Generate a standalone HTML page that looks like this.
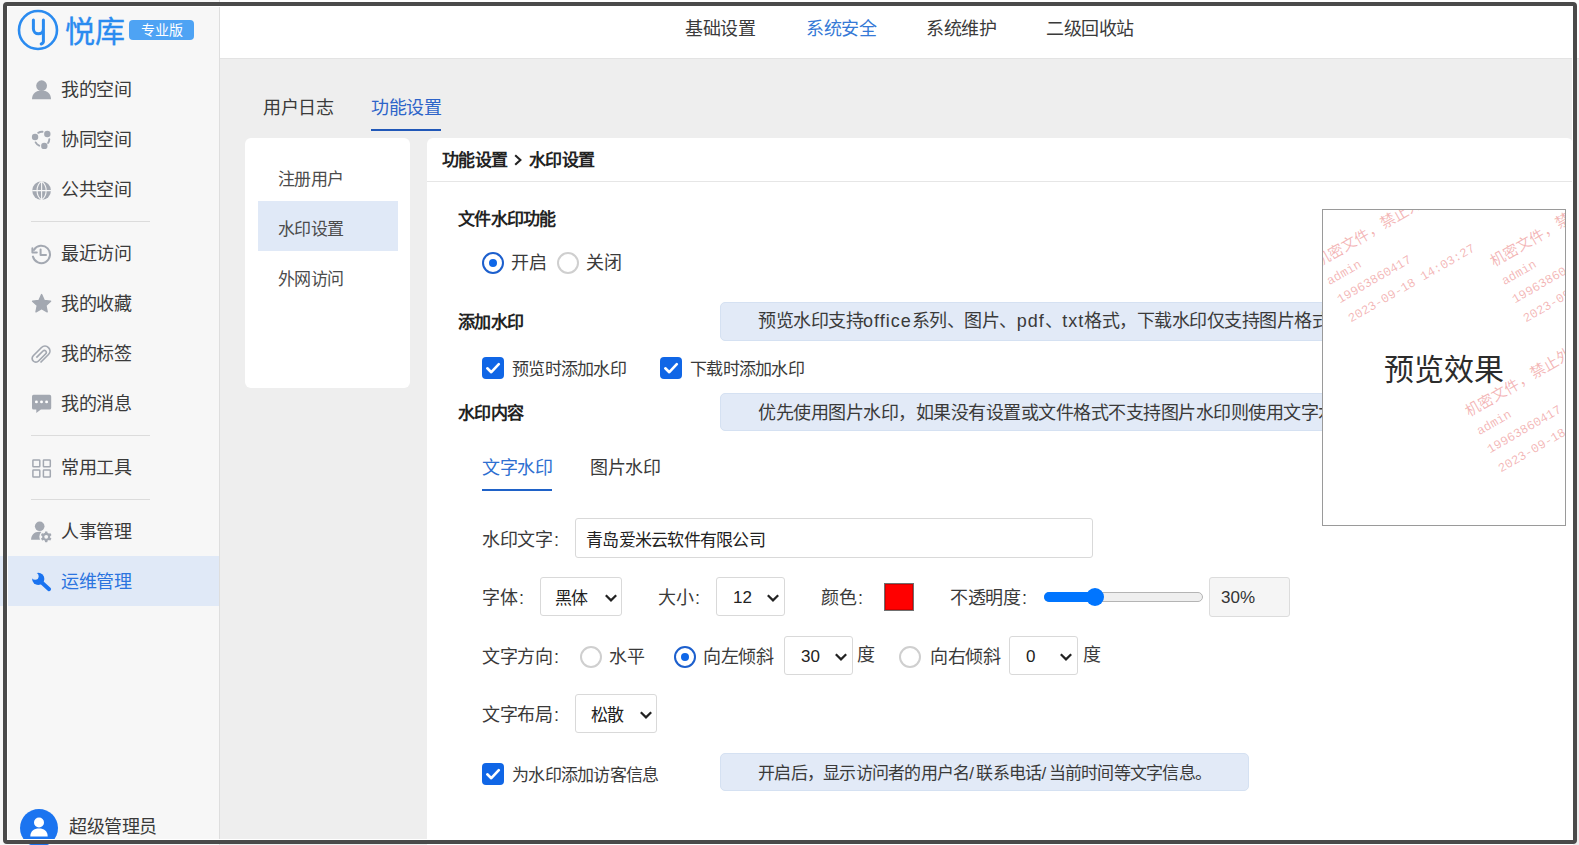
<!DOCTYPE html>
<html lang="zh-CN"><head><meta charset="utf-8">
<style>
*{box-sizing:border-box;margin:0;padding:0}
html,body{width:1579px;height:845px;overflow:hidden;background:#fff;font-family:"Liberation Sans",sans-serif;color:#333}
.a{position:absolute;white-space:nowrap}
#side{position:absolute;left:0;top:0;width:220px;height:845px;background:#f7f7f7;border-right:1px solid #dedede}
#head{position:absolute;left:220px;top:0;width:1359px;height:59px;background:#fff;border-bottom:1px solid #e3e3e3}
#mainbg{position:absolute;left:220px;top:59px;width:1359px;height:786px;background:#eeeeee}
.mi{position:absolute;left:61px;font-size:18px;letter-spacing:-0.5px;line-height:24px;color:#3a3a3a}
.ic{position:absolute;left:31px;width:20px;height:20px}
.sep{position:absolute;left:31px;width:119px;height:1px;background:#dcdcdc}
.nav{position:absolute;top:16.5px;font-size:18px;letter-spacing:-0.5px;line-height:24px;color:#3a3a3a}
.card{position:absolute;background:#fff;border-radius:6px}
.sub{position:absolute;left:278px;font-size:17px;letter-spacing:-0.75px;line-height:20px;color:#4c4c4c}
.lbl{position:absolute;left:458px;font-size:17px;letter-spacing:-0.75px;font-weight:bold;color:#222;line-height:20px}
.info{position:absolute;left:720px;background:#e2eaf7;border:1px solid #d5e1f2;border-radius:5px;overflow:hidden}
.info span{position:absolute;left:37px;font-size:18px;letter-spacing:-0.5px;color:#3a3a3a;white-space:nowrap}
.t18{font-size:18px;letter-spacing:-0.5px;color:#3a3a3a;line-height:24px}
.t16{font-size:17px;letter-spacing:-0.75px;color:#3a3a3a;line-height:20px}
.radio{position:absolute;width:22px;height:22px;border-radius:50%;border:2px solid #cfcfcf;background:#fff}
.radio.on{border-color:#1c5fcd}
.radio.on::after{content:"";position:absolute;left:5px;top:5px;width:8px;height:8px;border-radius:50%;background:#0f67e8}
.cb{position:absolute;width:22px;height:22px;border-radius:4px;background:#1066e6}
.sel{position:absolute;border:1px solid #d9d9d9;border-radius:3px;background:#fff;height:39px}
.sel span{position:absolute;top:10.5px;font-size:17px;letter-spacing:-0.75px;color:#222;line-height:20px}
.sel svg{position:absolute;top:14px}
.wm{position:absolute;transform-origin:0 0;transform:rotate(-30deg);font-family:"Liberation Mono",monospace;font-size:12.5px;line-height:21.6px;color:rgba(220,40,40,0.34);letter-spacing:0.08px;white-space:nowrap}
.wm .l1{font-size:15px;line-height:21.6px}
i.lat{font-style:normal;letter-spacing:1px}
i.co{font-style:normal;margin-left:2px}
i.sl{font-style:normal;letter-spacing:2.5px}
#frame{position:absolute;left:3px;top:2px;width:1574px;height:842px;border:4px solid #4a4a4a;border-radius:4px;box-shadow:inset 0 0 0 1px #fff;pointer-events:none}
</style></head><body>

<div id="side"></div>
<div id="head"></div>
<div id="mainbg"></div>

<!-- logo -->
<svg class="a" style="left:16px;top:9px" width="44" height="44" viewBox="0 0 44 44">
 <circle cx="22" cy="21" r="19" fill="none" stroke="#2a8bf0" stroke-width="2.6"/>
 <path d="M17.4 11 V19.8 a5 5 0 0 0 10 0 M27.4 11 V32.6 q0 1.6 -2.2 2.4" fill="none" stroke="#2a8bf0" stroke-width="3" stroke-linecap="round"/>
</svg>
<div class="a" style="left:65px;top:13.5px;font-size:30px;line-height:36px;color:#2a8bf0;-webkit-text-stroke:0.35px #2a8bf0">悦库</div>
<div class="a" style="left:129px;top:20px;width:65px;height:20px;background:#4ea3f4;border-radius:4px;color:#fff;font-size:14px;line-height:20px;text-align:center">专业版</div>


<div class="sep" style="top:221px"></div>
<div class="sep" style="top:435px"></div>
<div class="sep" style="top:499px"></div>
<div class="a" style="left:0;top:556px;width:219px;height:50px;background:#e0e9f7"></div>

<svg class="a" style="left:30px;top:78px" width="24" height="24" viewBox="0 0 24 24" fill="#a3a8b1">
 <circle cx="11.6" cy="7.7" r="5.4"/><path d="M2 21.3 C2 15.5 6 12.4 11.6 12.4 C17.2 12.4 21 15.5 21 21.3 Z"/>
</svg>
<div class="mi" style="top:78px">我的空间</div>

<svg class="a" style="left:30px;top:128px" width="24" height="24" viewBox="0 0 24 24">
 <path d="M8.19 4.84 A7.26 7.26 0 0 1 12.55 3.76 M19.30 11.25 A7.26 7.26 0 0 1 18.06 15.06 M9.20 17.68 A7.26 7.26 0 0 1 5.63 14.41" stroke="#a3a8b1" stroke-width="1.9" fill="none" stroke-linecap="round"/>
 <circle cx="5.05" cy="9.04" r="3.2" fill="#a3a8b1"/><circle cx="17.3" cy="6" r="3.2" fill="#a3a8b1"/><circle cx="14.3" cy="17.9" r="3.2" fill="#a3a8b1"/>
</svg>
<div class="mi" style="top:128px">协同空间</div>

<svg class="a" style="left:30px;top:178.8px" width="24" height="24" viewBox="0 0 24 24">
 <circle cx="11.6" cy="11.6" r="9.4" fill="#a3a8b1"/>
 <path d="M11.6 2.2 V21 M2.2 11.6 H21 M11.4 2.4 C5.6 6.5 5.6 16.7 11.4 20.8 M11.8 2.4 C17.6 6.5 17.6 16.7 11.8 20.8" stroke="#f7f7f7" stroke-width="1.1" fill="none"/>
</svg>
<div class="mi" style="top:178px">公共空间</div>

<svg class="a" style="left:30px;top:241.5px" width="24" height="24" viewBox="0 0 24 24" fill="none" stroke="#a3a8b1" stroke-width="2" stroke-linecap="round" stroke-linejoin="round">
 <path d="M3.9 7.9 A8.7 8.7 0 1 1 2.9 14.6"/><path d="M2.4 6.2 V10.4 H6.8"/><path d="M10.6 7.4 V12.9 H16"/>
</svg>
<div class="mi" style="top:242px">最近访问</div>

<svg class="a" style="left:30px;top:292px" width="24" height="24" viewBox="0 0 24 24" fill="#a3a8b1">
 <path d="M11.6 2.6 L14.3 8.5 L20.6 9.2 L15.9 13.5 L17.2 19.8 L11.6 16.6 L6 19.8 L7.3 13.5 L2.6 9.2 L8.9 8.5 Z" stroke="#a3a8b1" stroke-width="1.4" stroke-linejoin="round"/>
</svg>
<div class="mi" style="top:292px">我的收藏</div>

<svg class="a" style="left:30px;top:342px" width="24" height="24" viewBox="0 0 24 24" fill="none" stroke="#a3a8b1" stroke-width="1.7" stroke-linecap="butt">
 <path d="M10.5 20.5 L18.5 12.5 A4.95 4.95 0 0 0 11.5 5.5 L3.25 13.75 A3.71 3.71 0 0 0 8.5 19 L15.75 11.75 A1.94 1.94 0 0 0 13 9 L6.35 15.65"/>
</svg>
<div class="mi" style="top:342px">我的标签</div>

<svg class="a" style="left:30px;top:392px" width="24" height="24" viewBox="0 0 24 24">
 <path d="M3.6 2.8 H19.6 a1.6 1.6 0 0 1 1.6 1.6 V15.9 a1.6 1.6 0 0 1 -1.6 1.6 H10.9 L6.3 20.9 V17.5 H3.6 a1.6 1.6 0 0 1 -1.6 -1.6 V4.4 a1.6 1.6 0 0 1 1.6 -1.6 Z" fill="#a3a8b1"/>
 <circle cx="6.4" cy="9.9" r="1.45" fill="#fff"/><circle cx="11.5" cy="9.9" r="1.45" fill="#fff"/><circle cx="16.6" cy="9.9" r="1.45" fill="#fff"/>
</svg>
<div class="mi" style="top:392px">我的消息</div>

<svg class="a" style="left:30px;top:456px" width="24" height="24" viewBox="0 0 24 24" fill="none" stroke="#a3a8b1" stroke-width="1.5">
 <rect x="2.9" y="3.9" width="6.9" height="6.9" rx="0.6"/><rect x="13.4" y="3.9" width="6.9" height="6.9" rx="0.6"/>
 <rect x="2.9" y="14.1" width="6.9" height="6.9" rx="0.6"/><rect x="13.4" y="14.1" width="6.9" height="6.9" rx="0.6"/>
</svg>
<div class="mi" style="top:456px">常用工具</div>

<svg class="a" style="left:30px;top:520px" width="24" height="24" viewBox="0 0 24 24">
 <circle cx="9.7" cy="6.3" r="4.8" fill="#a3a8b1"/>
 <path d="M1.1 19.8 C1.1 15.2 4.2 11.8 9.2 11.8 C13.5 11.8 16.5 14 17.5 17.5 V19.8 Z" fill="#a3a8b1"/>
 <circle cx="16.2" cy="16.8" r="6.9" fill="#f7f7f7"/>
 <g transform="translate(16.2,16.8)" fill="#a3a8b1"><circle r="4"/>
 <rect x="-1.25" y="-5.4" width="2.5" height="10.8" rx="0.4"/><rect x="-1.25" y="-5.4" width="2.5" height="10.8" rx="0.4" transform="rotate(60)"/><rect x="-1.25" y="-5.4" width="2.5" height="10.8" rx="0.4" transform="rotate(120)"/>
 <circle r="1.9" fill="#f7f7f7"/></g>
</svg>
<div class="mi" style="top:520px">人事管理</div>

<svg class="a" style="left:30px;top:568px" width="24" height="28" viewBox="0 0 24 28">
 <circle cx="8.25" cy="10.9" r="6.1" fill="#1a73f0"/>
 <line x1="9" y1="12" x2="19.1" y2="21.3" stroke="#1a73f0" stroke-width="3.9" stroke-linecap="round"/>
 <circle cx="5.1" cy="8.3" r="3.5" fill="#e0e9f7"/>
</svg>
<div class="mi" style="top:570px;color:#2b74df">运维管理</div>

<svg class="a" style="left:20px;top:809px" width="38" height="38" viewBox="0 0 38 38">
 <circle cx="19" cy="19" r="19" fill="#1b74f0"/>
 <circle cx="19" cy="13.5" r="5" fill="#fff"/><path d="M10.3 27.4 C10.3 22 14 19.5 19 19.5 C24 19.5 27.7 22 27.7 27.4 Z" fill="#fff"/>
</svg>
<div class="mi" style="left:69px;top:815px">超级管理员</div>

<!-- header nav -->
<div class="nav" style="left:685px">基础设置</div>
<div class="nav" style="left:806px;color:#3579d6">系统安全</div>
<div class="nav" style="left:926px">系统维护</div>
<div class="nav" style="left:1046px">二级回收站</div>

<!-- tabs -->
<div class="a t18" style="left:263px;top:96px">用户日志</div>
<div class="a t18" style="left:371px;top:96px;color:#2d64c9">功能设置</div>
<div class="a" style="left:371px;top:129px;width:70px;height:2px;background:#2158b8"></div>

<!-- submenu card -->
<div class="card" style="left:245px;top:138px;width:165px;height:250px"></div>
<div class="a" style="left:258px;top:201px;width:140px;height:50px;background:#e0e9f7"></div>
<div class="sub" style="top:170px">注册用户</div>
<div class="sub" style="top:220px">水印设置</div>
<div class="sub" style="top:270px">外网访问</div>

<!-- main card -->
<div class="card" style="left:427px;top:138px;width:1146px;height:720px"></div>
<div class="a" style="left:427px;top:181px;width:1146px;height:1px;background:#e6e6e6"></div>
<div class="a" style="left:442px;top:151px;font-size:17px;letter-spacing:-0.75px;line-height:20px;font-weight:bold;color:#222">功能设置<span style="display:inline-block;width:22px;height:10px;position:relative"><svg style="position:absolute;left:6px;top:-2px" width="10" height="12" viewBox="0 0 10 12"><path d="M2.2 1.2 L7.4 6 L2.2 10.8" fill="none" stroke="#222" stroke-width="2.1"/></svg></span>水印设置</div>


<div class="lbl" style="top:210px">文件水印功能</div>
<div class="radio on" style="left:482px;top:252px"></div>
<div class="a t18" style="left:511px;top:251px">开启</div>
<div class="radio" style="left:557px;top:252px"></div>
<div class="a t18" style="left:586px;top:251px">关闭</div>

<div class="lbl" style="top:313px">添加水印</div>
<div class="info" style="top:302px;width:700px;height:39px"><span style="top:6px;line-height:24px">预览水印支持<i class="lat">office</i>系列、图片、<i class="lat">pdf</i>、<i class="lat">txt</i>格式，下载水印仅支持图片格式</span></div>
<div class="cb" style="left:482px;top:357px"><svg width="22" height="22" viewBox="0 0 22 22"><path d="M5.3 11.3 L9.3 15.2 L16.8 7.2" fill="none" stroke="#fff" stroke-width="2.6" stroke-linecap="round" stroke-linejoin="round"/></svg></div>
<div class="a t16" style="left:512px;top:360px">预览时添加水印</div>
<div class="cb" style="left:660px;top:357px"><svg width="22" height="22" viewBox="0 0 22 22"><path d="M5.3 11.3 L9.3 15.2 L16.8 7.2" fill="none" stroke="#fff" stroke-width="2.6" stroke-linecap="round" stroke-linejoin="round"/></svg></div>
<div class="a t16" style="left:690px;top:360px">下载时添加水印</div>

<div class="lbl" style="top:404px">水印内容</div>
<div class="info" style="top:393px;width:700px;height:38px"><span style="top:6.5px;line-height:24px">优先使用图片水印，如果没有设置或文件格式不支持图片水印则使用文字水印</span></div>

<div class="a t18" style="left:482px;top:456px;color:#2e6fd1">文字水印</div>
<div class="a t18" style="left:590px;top:456px">图片水印</div>
<div class="a" style="left:482px;top:489px;width:70px;height:2px;background:#1f62c8"></div>

<div class="a t18" style="left:482px;top:528px">水印文字<i class="co">:</i></div>
<div class="a" style="left:575px;top:518px;width:518px;height:40px;border:1px solid #d9d9d9;border-radius:3px"></div>
<div class="a t16" style="left:586px;top:531px;color:#222">青岛爱米云软件有限公司</div>

<div class="a t18" style="left:482px;top:586px">字体<i class="co">:</i></div>
<div class="sel" style="left:540px;top:577px;width:82px"><span style="left:14px">黑体</span><svg style="left:62.6px;top:14.5px" width="14" height="10" viewBox="0 0 14 10"><path d="M1.8 2.2 L7 7.4 L12.2 2.2" fill="none" stroke="#222" stroke-width="2.2"/></svg></div>
<div class="a t18" style="left:658px;top:586px">大小<i class="co">:</i></div>
<div class="sel" style="left:716px;top:577px;width:69px"><span style="left:16px;top:9.5px;letter-spacing:0">12</span><svg style="left:49.3px;top:14.5px" width="14" height="10" viewBox="0 0 14 10"><path d="M1.8 2.2 L7 7.4 L12.2 2.2" fill="none" stroke="#222" stroke-width="2.2"/></svg></div>
<div class="a t18" style="left:821px;top:586px">颜色<i class="co">:</i></div>
<div class="a" style="left:884px;top:583px;width:30px;height:28px;background:#ff0000;border:1px solid #707070;box-shadow:inset 0 0 0 1px #d40000"></div>
<div class="a t18" style="left:950px;top:586px">不透明度<i class="co">:</i></div>
<div class="a" style="left:1044px;top:592px;width:159px;height:10px;border-radius:5px;background:#efefef;border:1px solid #b4b4b4"></div>
<div class="a" style="left:1044px;top:592px;width:56px;height:10px;border-radius:5px 0 0 5px;background:#0075ff"></div>
<div class="a" style="left:1085.8px;top:587.6px;width:18.4px;height:18.4px;border-radius:50%;background:#0075ff"></div>
<div class="a" style="left:1209px;top:577px;width:81px;height:40px;background:#f5f5f5;border:1px solid #dcdcdc;border-radius:3px"></div>
<div class="a t16" style="left:1221px;top:588px;color:#333;letter-spacing:0">30%</div>

<div class="a t18" style="left:482px;top:645px">文字方向<i class="co">:</i></div>
<div class="radio" style="left:580px;top:646px"></div>
<div class="a t18" style="left:609px;top:645px">水平</div>
<div class="radio on" style="left:674px;top:646px"></div>
<div class="a t18" style="left:703px;top:645px">向左倾斜</div>
<div class="sel" style="left:784px;top:636px;width:69px"><span style="left:16px;top:9.5px;letter-spacing:0">30</span><svg style="left:49.3px;top:14.5px" width="14" height="10" viewBox="0 0 14 10"><path d="M1.8 2.2 L7 7.4 L12.2 2.2" fill="none" stroke="#222" stroke-width="2.2"/></svg></div>
<div class="a t18" style="left:857px;top:643px">度</div>
<div class="radio" style="left:899px;top:646px"></div>
<div class="a t18" style="left:930px;top:645px">向右倾斜</div>
<div class="sel" style="left:1009px;top:636px;width:69px"><span style="left:16px;top:9.5px;letter-spacing:0">0</span><svg style="left:49.3px;top:14.5px" width="14" height="10" viewBox="0 0 14 10"><path d="M1.8 2.2 L7 7.4 L12.2 2.2" fill="none" stroke="#222" stroke-width="2.2"/></svg></div>
<div class="a t18" style="left:1083px;top:643px">度</div>

<div class="a t18" style="left:482px;top:703px">文字布局<i class="co">:</i></div>
<div class="sel" style="left:575px;top:694px;width:82px"><span style="left:15px">松散</span><svg style="left:62.6px;top:14.5px" width="14" height="10" viewBox="0 0 14 10"><path d="M1.8 2.2 L7 7.4 L12.2 2.2" fill="none" stroke="#222" stroke-width="2.2"/></svg></div>

<div class="cb" style="left:482px;top:763px"><svg width="22" height="22" viewBox="0 0 22 22"><path d="M5.3 11.3 L9.3 15.2 L16.8 7.2" fill="none" stroke="#fff" stroke-width="2.6" stroke-linecap="round" stroke-linejoin="round"/></svg></div>
<div class="a t16" style="left:512px;top:766px">为水印添加访客信息</div>
<div class="info" style="top:753px;width:529px;height:38px"><span style="top:10px;font-size:17px;letter-spacing:-0.75px;line-height:20px">开启后，显示访问者的用户名<i class="sl">/</i>联系电话<i class="sl">/</i>当前时间等文字信息。</span></div>

<!-- preview -->
<div class="a" style="left:1322px;top:209px;width:244px;height:317px;border:1px solid #9a9a9a;background:#fff;overflow:hidden">
 <div class="wm" style="left:-11.5px;top:45px"><div class="l1">机密文件，禁止外传</div><div>admin</div><div>19963860417</div><div>2023-09-18 14:03:27</div></div>
 <div class="wm" style="left:164px;top:45px"><div class="l1">机密文件，禁止外传</div><div>admin</div><div>19963860417</div><div>2023-09-18 14:03:27</div></div>
 <div class="wm" style="left:139px;top:195px"><div class="l1">机密文件，禁止外传</div><div>admin</div><div>19963860417</div><div>2023-09-18 14:03:27</div></div>
 <div class="a" style="left:61px;top:140px;font-size:30px;line-height:40px;color:#2c2c2c">预览效果</div>
</div>

<div id="frame"></div>
</body></html>
